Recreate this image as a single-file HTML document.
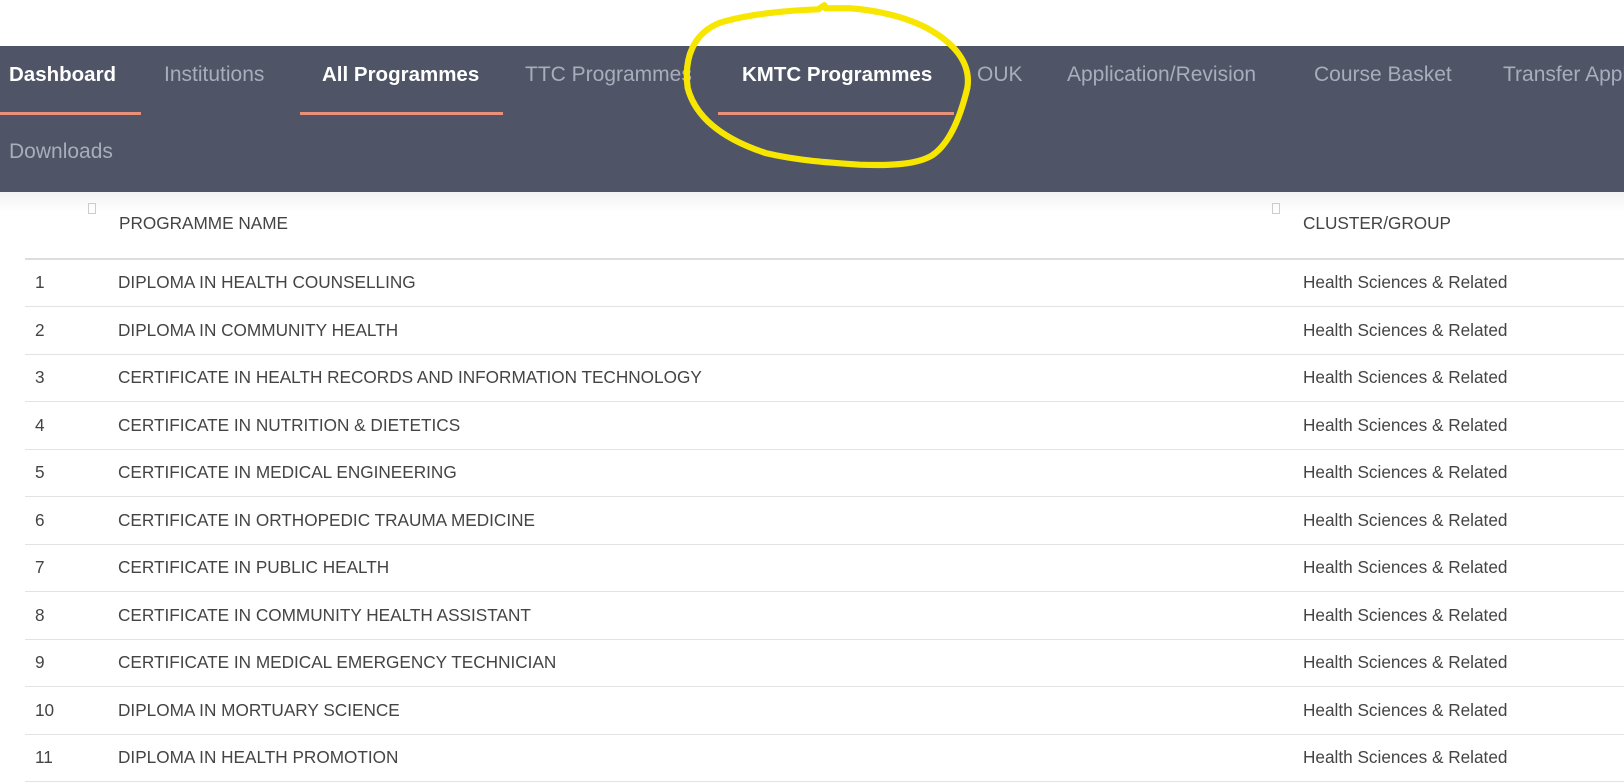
<!DOCTYPE html>
<html><head><meta charset="utf-8"><style>
body{margin:0;width:1624px;height:782px;overflow:hidden;background:#fff;font-family:"Liberation Sans",sans-serif;position:relative}
.nav{position:absolute;left:0;top:46px;width:1624px;height:146px;background:#4f5466}
.nav a{position:absolute;font-size:21px;line-height:24px;color:#a9adbb;white-space:nowrap;top:17px}
.nav a.w{color:#fff;font-weight:bold;font-size:20.5px}
.ul{position:absolute;top:66px;height:3px;background:#e8907a}
.t{position:absolute;font-size:17.2px;line-height:20px;color:#444;white-space:nowrap}
.line{position:absolute;left:25px;width:1600px;height:1px;background:#e3e3e3}
.sq{position:absolute;width:6px;height:9px;border:1px solid #ccc}
</style></head><body>
<div class="nav">
<a class="w" style="left:9px">Dashboard</a>
<a style="left:164px">Institutions</a>
<a class="w" style="left:322px">All Programmes</a>
<a style="left:525px">TTC Programmes</a>
<a class="w" style="left:742px">KMTC Programmes</a>
<a style="left:977px">OUK</a>
<a style="left:1067px">Application/Revision</a>
<a style="left:1314px">Course Basket</a>
<a style="left:1503px">Transfer Application</a>
<a style="left:9px;top:94px">Downloads</a>
<div class="ul" style="left:0;width:141px"></div>
<div class="ul" style="left:300px;width:203px"></div>
<div class="ul" style="left:718px;width:236px"></div>
</div>
<div style="position:absolute;left:0;top:192px;width:1624px;height:20px;background:linear-gradient(#f2f2f2,#fff)"></div>
<div class="sq" style="left:88px;top:203px"></div>
<div class="sq" style="left:1272px;top:203px"></div>
<div class="t" style="left:119px;top:213px">PROGRAMME NAME</div>
<div class="t" style="left:1303px;top:213px">CLUSTER/GROUP</div>
<div class="line" style="top:258px;height:2px;background:#ddd"></div>
<div id="rows"></div>
<script>
var n=["DIPLOMA IN HEALTH COUNSELLING","DIPLOMA IN COMMUNITY HEALTH","CERTIFICATE IN HEALTH RECORDS AND INFORMATION TECHNOLOGY","CERTIFICATE IN NUTRITION &amp; DIETETICS","CERTIFICATE IN MEDICAL ENGINEERING","CERTIFICATE IN ORTHOPEDIC TRAUMA MEDICINE","CERTIFICATE IN PUBLIC HEALTH","CERTIFICATE IN COMMUNITY HEALTH ASSISTANT","CERTIFICATE IN MEDICAL EMERGENCY TECHNICIAN","DIPLOMA IN MORTUARY SCIENCE","DIPLOMA IN HEALTH PROMOTION"];
var h="";
for(var i=0;i<n.length;i++){var y=272+i*47.5;
h+='<div class="t" style="left:35px;top:'+y+'px">'+(i+1)+'</div><div class="t" style="left:118px;top:'+y+'px">'+n[i]+'</div><div class="t" style="left:1303px;top:'+y+'px">Health Sciences &amp; Related</div>';
h+='<div class="line" style="top:'+(y+34)+'px"></div>';}
document.getElementById("rows").innerHTML=h;
</script>
<svg style="position:absolute;left:0;top:0" width="1624" height="782"><g transform="scale(1.0357)"><path d="M796,5 L790,9 C760,10 720,14 695,22 C670,32 660,55 664,85 C672,115 700,135 740,148 C770,155 800,157 830,159 C860,160 885,159 900,150 C918,138 928,110 934,85 C938,60 920,42 900,30 C880,18 850,10 820,8 L797,8" fill="none" stroke="#f7e600" stroke-width="6" stroke-linecap="round" stroke-linejoin="round"/></g></svg>
</body></html>
